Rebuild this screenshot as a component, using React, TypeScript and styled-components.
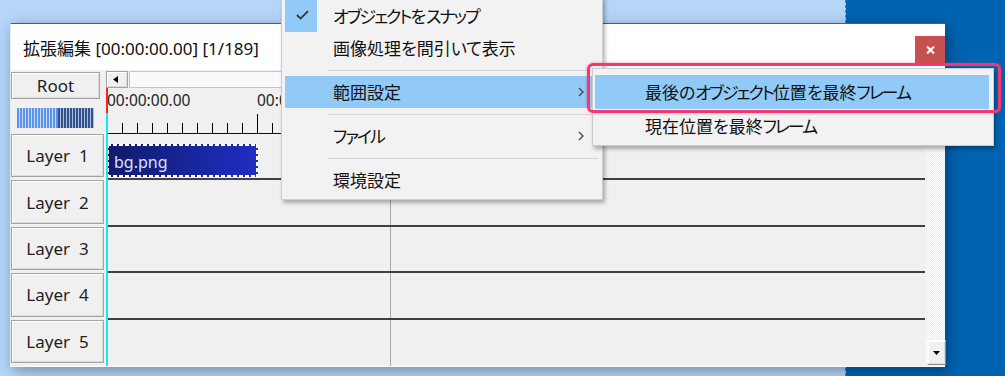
import React from 'react';
import styled, { createGlobalStyle } from 'styled-components';

const GlobalStyle = createGlobalStyle`
  html, body {
    margin: 0;
    padding: 0;
  }
  body {
    width: 1005px;
    height: 376px;
    overflow: hidden;
    background: #0063b1;
  }
`;

const UI_FONT = `"Noto Sans", "Noto Sans CJK JP", sans-serif`;

const menuItems = [
  { label: 'オブジェクトをスナップ', checked: true },
  { label: '画像処理を間引いて表示' },
  { sep: true },
  { label: '範囲設定', sub: true, active: true },
  { sep: true },
  { label: 'ファイル', sub: true },
  { sep: true },
  { label: '環境設定' },
];

const subItems = [
  { label: '最後のオブジェクト位置を最終フレーム', active: true },
  { label: '現在位置を最終フレーム' },
];

const layers = [1, 2, 3, 4, 5];

// katakana runs get set tighter, the way the Windows UI font draws them
const MenuText = ({ text }: { text: string }) => {
  const runs = text.match(/[ァ-ヶー]+|[^ァ-ヶー]+/g) || [];
  return (
    <>
      {runs.map((r, i) => (/[ァ-ヶー]/.test(r) ? <Kana key={i}>{r}</Kana> : <span key={i}>{r}</span>))}
    </>
  );
};

const App: React.FC = () => {
  const ticks = Array.from({ length: 55 }, (_, i) => i);

  return (
    <Desktop>
      <GlobalStyle />
      <Backdrop />

      <Window>
        <TitleBar>
          <Title>拡張編集 [00:00:00.00] [1/189]</Title>
          <CloseButton>
            <svg width='9' height='8' viewBox='0 0 9 8'>
              <path d='M1 0.5 L8 7.5 M8 0.5 L1 7.5' stroke='#fff' strokeWidth='2' />
            </svg>
          </CloseButton>
        </TitleBar>

        <Client>
          <LeftHeader>
            <RootButton>Root</RootButton>
            <Meter>
              <MeterPart $tone='light' />
              <MeterPart $tone='dark' />
            </Meter>
          </LeftHeader>

          <TimeHeader>
            <HScroll>
              <ArrowButton>
                <svg width='5' height='7' viewBox='0 0 5 7'>
                  <path d='M5 0 L0 3.5 L5 7 Z' fill='#000' />
                </svg>
              </ArrowButton>
              <HThumb />
            </HScroll>
            <Ruler>
              <Labels>
                <TimeLabel>00:00:00.00</TimeLabel>
                <TimeLabel>00:00:00.05</TimeLabel>
                <TimeLabel>00:00:00.10</TimeLabel>
              </Labels>
              <svg width='819' height='20' style={{ display: 'block' }}>
                {ticks.map((i) => (
                  <line
                    key={i}
                    x1={1.5 + i * 15}
                    x2={1.5 + i * 15}
                    y1={i % 10 === 0 ? 0 : 9}
                    y2={20}
                    stroke='#000'
                    strokeWidth='1'
                  />
                ))}
                <line x1='0' x2='819' y1='19.5' y2='19.5' stroke='#111' strokeWidth='1' />
              </svg>
            </Ruler>
          </TimeHeader>

          <Corner />

          <VScroll>
            <DownButton>
              <svg width='7' height='4' viewBox='0 0 7 4'>
                <path d='M0 0 L7 0 L3.5 4 Z' fill='#000' />
              </svg>
            </DownButton>
          </VScroll>

          {layers.map((n) => (
            <React.Fragment key={n}>
              <LayerCell>
                <LayerButton>{`Layer  ${n}`}</LayerButton>
              </LayerCell>
              <Track $last={n === layers.length}>
                {n === 1 && <Clip>bg.png</Clip>}
              </Track>
            </React.Fragment>
          ))}

          <Playhead />
        </Client>
      </Window>

      <Menu>
        {menuItems.map((item, i) =>
          item.sep ? (
            <Separator key={i} />
          ) : (
            <MenuItem key={i} $active={!!item.active}>
              <CheckCell $on={!!item.checked}>
                {item.checked && (
                  <svg width='13' height='10' viewBox='0 0 13 10'>
                    <path d='M1 5 L4.6 8.6 L12 1.2' stroke='#333' strokeWidth='1.8' fill='none' />
                  </svg>
                )}
              </CheckCell>
              <ItemLabel>
                <MenuText text={item.label!} />
              </ItemLabel>
              {item.sub && (
                <SubArrow>
                  <svg width='6' height='10' viewBox='0 0 6 10'>
                    <path d='M1 1 L5 5 L1 9' stroke='#444' strokeWidth='1.3' fill='none' />
                  </svg>
                </SubArrow>
              )}
            </MenuItem>
          )
        )}
      </Menu>

      <SubMenu>
        {subItems.map((item, i) => (
          <SubItem key={i} $active={!!item.active}>
            <MenuText text={item.label} />
          </SubItem>
        ))}
      </SubMenu>

      <Highlight />
    </Desktop>
  );
};

const Desktop = styled.div`
  position: relative;
  width: 1005px;
  height: 376px;
  overflow: hidden;
  background: #0063b1;
  font-family: ${UI_FONT};
  font-feature-settings: 'palt';
  color: #000;
`;

const Backdrop = styled.div`
  position: absolute;
  left: 0;
  top: 0;
  width: 845px;
  height: 100%;
  background: #b5d6f9;
  border-right: 1px dashed #6b7d90;
`;

const Window = styled.div`
  position: absolute;
  left: 10px;
  top: 23px;
  width: 935px;
  height: 344px;
  box-sizing: border-box;
  display: flex;
  flex-direction: column;
  background: #f0f0f0;
  border-top: 1px solid #4d5d70;
  border-left: 1px solid #e4ecf4;
  border-bottom: 1px solid #fafafa;
  box-shadow: 3px 4px 14px rgba(0, 0, 0, 0.35);
`;

const TitleBar = styled.div`
  height: 46px;
  flex: none;
  display: flex;
  align-items: center;
  background: #fff;
  padding-left: 12px;
`;

const Title = styled.div`
  font-size: 17px;
  color: #111;
  white-space: pre;
`;

const CloseButton = styled.div`
  margin-left: auto;
  align-self: flex-start;
  margin-top: 12px;
  width: 30px;
  height: 27px;
  background: #c75050;
  display: flex;
  align-items: center;
  justify-content: center;
`;

const Client = styled.div`
  position: relative;
  flex: 1;
  display: grid;
  grid-template-columns: 95px 819px 20px;
  grid-template-rows: 64px repeat(5, 1fr);
`;

const LeftHeader = styled.div`
  display: flex;
  flex-direction: column;
  padding-top: 2px;
`;

const bevel = `
  box-sizing: border-box;
  background: #f0f0f0;
  border: 1px solid #a3a3a3;
  box-shadow: inset 1px 1px 0 #fff, inset -1px -1px 0 #dcdcdc;
`;

const RootButton = styled.div`
  ${bevel}
  width: 89px;
  height: 27px;
  display: flex;
  align-items: center;
  justify-content: center;
  font-size: 17px;
  color: #222;
`;

const Meter = styled.div`
  display: flex;
  margin: 9px 0 0 6px;
  width: 77px;
  height: 20px;
`;

const MeterPart = styled.div<{ $tone: 'light' | 'dark' }>`
  height: 100%;
  width: ${(p) => (p.$tone === 'light' ? '41px' : '36px')};
  background: ${(p) =>
    p.$tone === 'light'
      ? 'repeating-linear-gradient(90deg, #5e93ec 0 2px, #c8dcf8 2px 3px)'
      : 'repeating-linear-gradient(90deg, #34518f 0 2px, #aebfdc 2px 3px)'};
`;

const TimeHeader = styled.div`
  display: flex;
  flex-direction: column;
  min-width: 0;
`;

const HScroll = styled.div`
  display: flex;
  height: 17px;
  margin-top: 1px;
  flex: none;
`;

const ArrowButton = styled.div`
  ${bevel}
  width: 22px;
  height: 17px;
  display: flex;
  align-items: center;
  justify-content: center;
  padding-right: 3px;
`;

const HThumb = styled.div`
  flex: 1;
  margin-left: 1px;
  box-sizing: border-box;
  border: 1px solid #c6c6c6;
  background: #f9f9f9;
`;

const Ruler = styled.div`
  flex: 1;
  display: flex;
  flex-direction: column;
  justify-content: space-between;
  overflow: hidden;
`;

const Labels = styled.div`
  display: flex;
  padding: 3px 0 0 1px;
`;

const TimeLabel = styled.div`
  width: 150px;
  flex: none;
  font-size: 15.5px;
  line-height: 18px;
  color: #222;
`;

const Corner = styled.div`
  background: #f0f0f0;
`;

const VScroll = styled.div`
  grid-column: 3;
  grid-row: 2 / 7;
  display: flex;
  flex-direction: column;
  justify-content: flex-end;
  background: repeating-conic-gradient(#fdfdfd 0 25%, #ececec 0 50%) 0 0 / 2px 2px;
`;

const DownButton = styled.div`
  ${bevel}
  border-color: #fff #8a8a8a #8a8a8a #fff;
  width: 19px;
  height: 25px;
  margin: 0 0 1px 2px;
  display: flex;
  align-items: center;
  justify-content: center;
`;

const LayerCell = styled.div`
  padding: 0 2px 3px 0;
  display: flex;
`;

const LayerButton = styled.div`
  ${bevel}
  flex: 1;
  display: flex;
  align-items: center;
  justify-content: center;
  font-size: 17px;
  color: #1e1e1e;
  white-space: pre;
`;

const Track = styled.div<{ $last: boolean }>`
  box-sizing: border-box;
  border-bottom: ${(p) => (p.$last ? 'none' : '2px solid #404040')};
  background: linear-gradient(#a9a9a9, #a9a9a9) no-repeat 284px 0 / 1px 100%, #f0f0f0;
  padding-top: 10px;
  display: flex;
  align-items: flex-start;
`;

const dash = '#fff 0 4px, transparent 4px 6px';

const Clip = styled.div`
  margin-left: 1px;
  width: 151px;
  height: 33px;
  box-sizing: border-box;
  display: flex;
  align-items: center;
  padding: 3px 0 0 7px;
  font-size: 16px;
  color: #dde2ff;
  background:
    repeating-linear-gradient(90deg, ${dash}) top / 100% 2px no-repeat,
    repeating-linear-gradient(90deg, ${dash}) bottom / 100% 2px no-repeat,
    repeating-linear-gradient(180deg, ${dash}) left / 2px 100% no-repeat,
    repeating-linear-gradient(180deg, ${dash}) right / 2px 100% no-repeat,
    linear-gradient(90deg, #101b68, #1e2ec4);
`;

const Playhead = styled.div`
  position: absolute;
  left: 95px;
  top: 18px;
  bottom: 0;
  width: 2px;
  background: linear-gradient(#ff2020 0 25px, #19e6f0 25px);
`;

const Menu = styled.div`
  position: absolute;
  left: 281px;
  top: -4px;
  width: 322px;
  box-sizing: border-box;
  padding: 3px;
  background: #f2f2f2;
  border: 1px solid #cccccc;
  box-shadow: 2px 3px 4px rgba(0, 0, 0, 0.3);
  z-index: 2;
`;

const MenuItem = styled.div<{ $active: boolean }>`
  height: 32px;
  display: flex;
  align-items: center;
  background: ${(p) => (p.$active ? '#91c9f7' : 'transparent')};
`;

const CheckCell = styled.div<{ $on: boolean }>`
  width: 32px;
  height: 32px;
  margin-right: 16px;
  display: flex;
  align-items: center;
  justify-content: center;
  padding: 0 0 2px 2px;
  box-sizing: border-box;
  background: ${(p) => (p.$on ? '#91c9f7' : 'transparent')};
`;

const ItemLabel = styled.div`
  font-family: "Noto Sans CJK JP", sans-serif;
  font-size: 17px;
  color: #111;
  flex: 1;
  padding-bottom: 2px;
`;

const Kana = styled.span`
  letter-spacing: -2px;
`;

const SubArrow = styled.div`
  width: 6px;
  margin-right: 15px;
  display: flex;
  align-items: center;
`;

const Separator = styled.div`
  height: 1px;
  margin: 6px 1px 5px 42px;
  background: #d7d7d7;
`;

const SubMenu = styled.div`
  position: absolute;
  left: 592px;
  top: 68px;
  width: 402px;
  box-sizing: border-box;
  padding: 6px 4px 2px 2px;
  background: #f2f2f2;
  border: 1px solid #cccccc;
  box-shadow: 2px 3px 4px rgba(0, 0, 0, 0.3);
  z-index: 3;
`;

const SubItem = styled.div<{ $active: boolean }>`
  height: 34px;
  display: flex;
  align-items: center;
  padding-left: 50px;
  padding-bottom: 2px;
  box-sizing: border-box;
  font-family: "Noto Sans CJK JP", sans-serif;
  font-size: 17px;
  color: #111;
  background: ${(p) => (p.$active ? '#91c9f7' : 'transparent')};
`;

const Highlight = styled.div`
  position: absolute;
  left: 587px;
  top: 63px;
  width: 414px;
  height: 50px;
  box-sizing: border-box;
  border: 3px solid #f2386e;
  border-radius: 6px;
  box-shadow: 0 0 3px rgba(242, 56, 110, 0.5);
  z-index: 4;
`;

export default App;
